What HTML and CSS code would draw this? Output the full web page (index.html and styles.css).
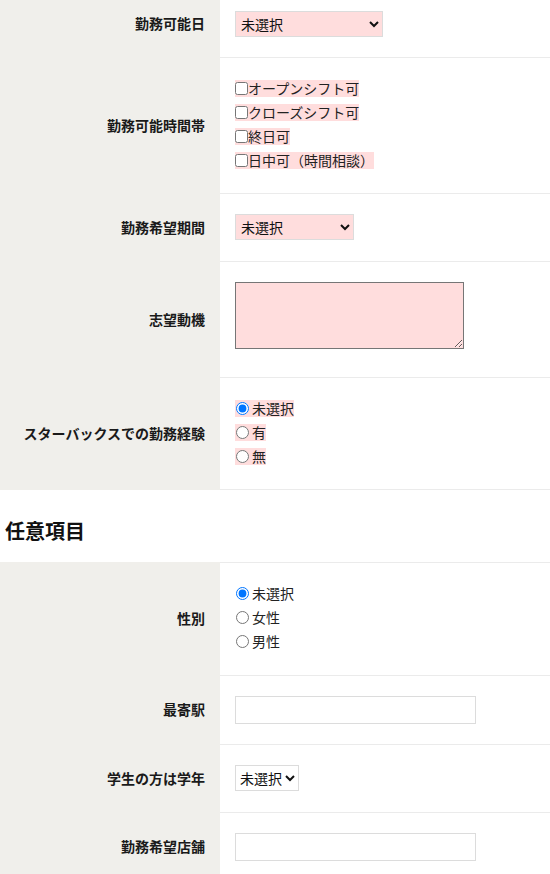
FILE: index.html
```html
<!DOCTYPE html>
<html lang="ja">
<head>
<meta charset="utf-8">
<title>応募フォーム</title>
<link rel="stylesheet" href="styles.css">
</head>
<body>
<div class="form-table form-table-scrolled">
  <div class="row">
    <div class="th">勤務可能日</div>
    <div class="td td-first">
      <select class="sel req sel-day"><option>未選択</option></select>
    </div>
  </div>
  <div class="row">
    <div class="th">勤務可能時間帯</div>
    <div class="td td-list">
      <div class="opts">
        <label class="opt req"><input type="checkbox" class="chk">オープンシフト可</label>
        <label class="opt req"><input type="checkbox" class="chk">クローズシフト可</label>
        <label class="opt req"><input type="checkbox" class="chk">終日可</label>
        <label class="opt req"><input type="checkbox" class="chk">日中可（時間相談）</label>
      </div>
    </div>
  </div>
  <div class="row">
    <div class="th">勤務希望期間</div>
    <div class="td td-field">
      <select class="sel req sel-period"><option>未選択</option></select>
    </div>
  </div>
  <div class="row">
    <div class="th">志望動機</div>
    <div class="td td-field">
      <textarea class="area req"></textarea>
    </div>
  </div>
  <div class="row">
    <div class="th">スターバックスでの勤務経験</div>
    <div class="td td-list">
      <div class="opts">
        <label class="opt req"><input type="radio" name="exp" class="rad" checked>未選択</label>
        <label class="opt req"><input type="radio" name="exp" class="rad">有</label>
        <label class="opt req"><input type="radio" name="exp" class="rad">無</label>
      </div>
    </div>
  </div>
</div>

<h3 class="section-title">任意項目</h3>

<div class="form-table form-table-top">
  <div class="row">
    <div class="th">性別</div>
    <div class="td td-list td-list-b">
      <div class="opts">
        <label class="opt"><input type="radio" name="sex" class="rad" checked>未選択</label>
        <label class="opt"><input type="radio" name="sex" class="rad">女性</label>
        <label class="opt"><input type="radio" name="sex" class="rad">男性</label>
      </div>
    </div>
  </div>
  <div class="row">
    <div class="th">最寄駅</div>
    <div class="td td-input">
      <input type="text" class="txt">
    </div>
  </div>
  <div class="row">
    <div class="th">学生の方は学年</div>
    <div class="td td-field">
      <select class="sel sel-grade"><option>未選択</option></select>
    </div>
  </div>
  <div class="row">
    <div class="th">勤務希望店舗</div>
    <div class="td td-input">
      <input type="text" class="txt">
    </div>
  </div>
</div>
</body>
</html>
```

FILE: styles.css
```css
html, body {
  margin: 0;
  padding: 0;
  background: #ffffff;
}
body {
  font-family: "Noto Sans CJK JP", "Noto Sans", sans-serif;
  font-size: 14px;
  color: #222222;
  overflow: hidden;
}
.form-table {
  display: block;
}
.form-table-scrolled {
  margin-top: -9px;
}
.row {
  display: grid;
  grid-template-columns: 220px 1fr;
}
.th {
  background: #f0efeb;
  display: flex;
  align-items: center;
  justify-content: flex-end;
  padding-right: 15px;
  padding-bottom: 3px;
  font-weight: bold;
  font-size: 14px;
  line-height: 1;
  color: #1a1a1a;
  white-space: nowrap;
}
.td {
  border-bottom: 1px solid #ebebeb;
  padding: 20px 15px 21px;
}
.form-table-top .row:first-child .td {
  border-top: 1px solid #ebebeb;
}
.td-first {
  padding-top: 20px;
  padding-bottom: 20px;
}
.td-list {
  padding-top: 22px;
  padding-bottom: 24px;
}
.td-list-b {
  padding-bottom: 25px;
}
.td-input {
  padding-top: 20px;
  padding-bottom: 20px;
}
.opts {
  display: flex;
  flex-direction: column;
  align-items: flex-start;
  gap: 7px;
}
.opt {
  display: inline-flex;
  align-items: center;
  height: 17px;
  line-height: 17px;
  font-size: 14px;
  color: #222222;
  white-space: nowrap;
}
.req {
  background-color: #ffdddd;
}
.chk {
  width: 13px;
  height: 13px;
  margin: 0;
}
.rad {
  width: 13px;
  height: 13px;
  margin: 0 3px 0 1px;
}
.sel {
  display: block;
  height: 26px;
  box-sizing: border-box;
  border: 1px solid #dcdcdc;
  border-radius: 0;
  background-color: #ffffff;
  font-family: "Noto Sans CJK JP", sans-serif;
  font-size: 14px;
  color: #111111;
  padding: 0 1px;
}
.sel.req {
  background-color: #ffdddd;
}
.sel-day {
  width: 148px;
}
.sel-period {
  width: 119px;
}
.sel-grade {
  width: auto;
  padding: 0;
}
.area {
  display: block;
  box-sizing: border-box;
  width: 229px;
  height: 67px;
  margin: 0 0 7px;
  border: 1px solid #767676;
  border-radius: 0;
  background-color: #ffdddd;
  font-family: "Noto Sans CJK JP", sans-serif;
  font-size: 14px;
}
.txt {
  display: block;
  box-sizing: border-box;
  width: 241px;
  height: 28px;
  margin: 0;
  border: 1px solid #dcdcdc;
  border-radius: 0;
  background: #ffffff;
  font-family: "Noto Sans CJK JP", sans-serif;
  font-size: 14px;
}
.section-title {
  margin: 0;
  padding: 26px 5px 16px;
  font-size: 20px;
  line-height: 30px;
  font-weight: bold;
  color: #111111;
}
```
